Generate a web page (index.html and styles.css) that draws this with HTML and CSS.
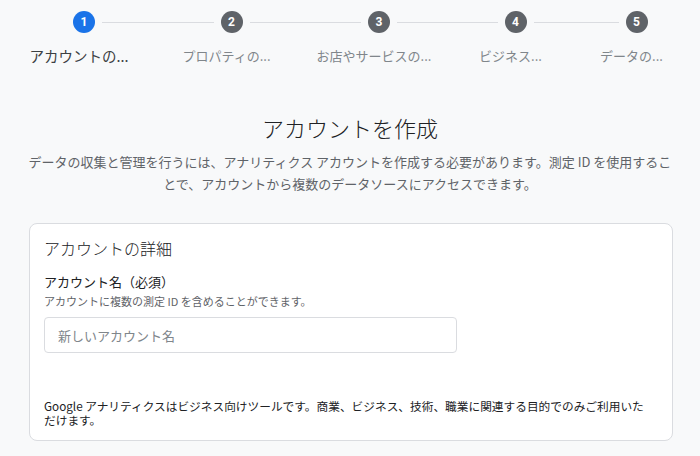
FILE: index.html
```html
<!DOCTYPE html>
<html lang="ja">
<head>
<meta charset="utf-8">
<title>アカウントを作成</title>
<link rel="stylesheet" href="styles.css">
</head>
<body>
<div class="page">
  <div class="stepper">
    <div class="step step-active">
      <div class="step-head"><span class="line line-hidden"></span><span class="circle">1</span><span class="line"></span></div>
      <div class="step-label">アカウントの...</div>
    </div>
    <div class="step">
      <div class="step-head"><span class="line"></span><span class="circle">2</span><span class="line"></span></div>
      <div class="step-label">プロパティの...</div>
    </div>
    <div class="step">
      <div class="step-head"><span class="line"></span><span class="circle">3</span><span class="line"></span></div>
      <div class="step-label">お店やサービスの...</div>
    </div>
    <div class="step">
      <div class="step-head"><span class="line"></span><span class="circle">4</span><span class="line"></span></div>
      <div class="step-label">ビジネス...</div>
    </div>
    <div class="step">
      <div class="step-head"><span class="line"></span><span class="circle">5</span><span class="line line-hidden"></span></div>
      <div class="step-label">データの...</div>
    </div>
  </div>

  <h1 class="title">アカウントを作成</h1>
  <p class="intro">データの収集と管理を行うには、アナリティクス アカウントを作成する必要があります。測定 ID を使用することで、アカウントから複数のデータソースにアクセスできます。</p>

  <div class="card">
    <h2 class="card-title">アカウントの詳細</h2>
    <div class="field-label">アカウント名（必須）</div>
    <div class="field-hint">アカウントに複数の測定 ID を含めることができます。</div>
    <input class="text-input" type="text" placeholder="新しいアカウント名">
    <p class="notice">Google アナリティクスはビジネス向けツールです。商業、ビジネス、技術、職業に関連する目的でのみご利用いただけます。</p>
  </div>
</div>
</body>
</html>
```

FILE: styles.css
```css
* { box-sizing: border-box; }

html, body {
  margin: 0;
  padding: 0;
  background: #f8f9fa;
}

body {
  font-family: "Noto Sans CJK JP", "Noto Sans", Roboto, sans-serif;
  color: #202124;
  width: 700px;
  height: 456px;
  overflow: hidden;
}

.page {
  display: flex;
  flex-direction: column;
}

/* Stepper */
.stepper {
  display: grid;
  grid-template-columns: 146px 149px 146px 127px 115px;
  padding: 11px 0 0 11px;
}

.step {
  display: flex;
  flex-direction: column;
  align-items: stretch;
}

.step-head {
  display: flex;
  align-items: center;
  gap: 7px;
  height: 22px;
}

.line {
  flex: 1;
  height: 1px;
  background: #dadce0;
}

.line-hidden { background: transparent; }

.step-head .line:first-child { margin-left: -7px; }
.step-head .line:last-child { margin-right: -7px; }

.circle {
  width: 22px;
  height: 22px;
  border-radius: 50%;
  background: #5f6368;
  color: #fff;
  font-family: Roboto, "Noto Sans", sans-serif;
  font-size: 12px;
  font-weight: 700;
  display: flex;
  align-items: center;
  justify-content: center;
  flex: none;
}

.step-active .circle { background: #1a73e8; }

.step-label {
  margin-top: 13px;
  line-height: 20px;
  font-size: 13px;
  color: #80868b;
  text-align: center;
  white-space: nowrap;
  padding-right: 10px;
}

.step-active .step-label {
  color: #3c4043;
  font-size: 14.5px;
}

/* Heading */
.title {
  margin: 45px 0 0;
  font-size: 22px;
  font-weight: 300;
  line-height: 32px;
  text-align: center;
  color: #202124;
}

.intro {
  margin: 8px auto 0;
  width: 652px;
  font-size: 13px;
  line-height: 22px;
  text-align: center;
  color: #5f6368;
}

/* Card */
.card {
  margin: 28px 0 0 29px;
  width: 644px;
  background: #fff;
  border: 1px solid #dadce0;
  border-radius: 8px;
  padding: 12px 20px 13px 14px;
  display: flex;
  flex-direction: column;
  align-items: flex-start;
}

.card-title {
  margin: 0;
  font-size: 16px;
  font-weight: 300;
  line-height: 24px;
  color: #202124;
}

.field-label {
  margin-top: 12px;
  font-size: 13px;
  line-height: 20px;
  color: #202124;
}

.field-hint {
  margin-top: 1px;
  font-size: 11px;
  line-height: 16px;
  color: #5f6368;
}

.text-input {
  margin-top: 8px;
  width: 413px;
  height: 36px;
  border: 1px solid #dadce0;
  border-radius: 4px;
  padding: 0 13px;
  font-family: "Noto Sans CJK JP", "Noto Sans", sans-serif;
  font-size: 13px;
  color: #202124;
  background: #fff;
  outline: none;
}

.text-input::placeholder { color: #80868b; }

.notice {
  margin: 46px 0 0;
  font-size: 11.7px;
  line-height: 14px;
  color: #202124;
}
```
